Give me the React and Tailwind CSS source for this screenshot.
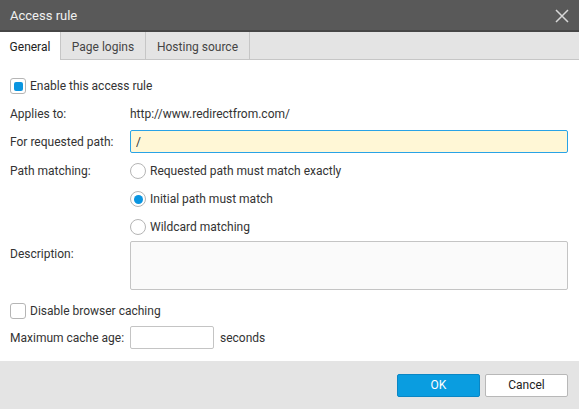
import React, { useState } from 'react';

const font = { fontFamily: 'Roboto, "Liberation Sans", sans-serif' };

const Checkbox = ({ checked, onChange }) => (
  <button
    type="button"
    onClick={onChange}
    className="w-[16px] h-[16px] border border-[#b5b5b5] rounded-[3px] bg-white flex items-center justify-center shrink-0"
  >
    {checked && <span className="w-[9px] h-[9px] rounded-[2px] bg-[#0a95e0]" />}
  </button>
);

const Radio = ({ checked, onChange, label }) => (
  <label className="flex items-center gap-[4px] h-[28px] cursor-pointer" onClick={onChange}>
    <span className="w-[16px] h-[16px] rounded-full border border-[#b5b5b5] bg-white flex items-center justify-center shrink-0">
      {checked && <span className="w-[9px] h-[9px] rounded-full bg-[#0a95e0]" />}
    </span>
    <span>{label}</span>
  </label>
);

const Label = ({ children }) => <div className="w-[120px] shrink-0">{children}</div>;

const App = () => {
  const [enabled, setEnabled] = useState(true);
  const [noCache, setNoCache] = useState(false);
  const [matching, setMatching] = useState('initial');
  const [path, setPath] = useState('/');

  return (
    <div style={font} className="w-[579px] h-[409px] bg-white flex flex-col text-[12px] text-[#333] overflow-hidden">
      {/* Title bar */}
      <div className="h-[32px] bg-[#595959] border-b-2 border-[#464646] flex items-center justify-between pl-[10px] pr-[10px] pt-[2px] shrink-0">
        <span className="text-[13px] text-[#f0f0f0]">Access rule</span>
        <svg width="14" height="14" viewBox="0 0 14 14" className="text-[#d8d8d8]">
          <path d="M1 1 L13 13 M13 1 L1 13" stroke="currentColor" strokeWidth="1.5" />
        </svg>
      </div>

      {/* Tabs */}
      <div className="h-[28px] bg-[#e4e4e4] flex border-b border-[#c6c6c6] shrink-0">
        <div className="w-[61px] bg-white flex items-center justify-center pt-[2px] text-[#222] border-r border-[#c6c6c6] h-[28px]">General</div>
        <div className="w-[85px] flex items-center justify-center pt-[2px] text-[#444] border-r border-[#c6c6c6]">Page logins</div>
        <div className="w-[104px] flex items-center justify-center pt-[2px] text-[#444] border-r border-[#c6c6c6]">Hosting source</div>
      </div>

      {/* Body */}
      <div className="flex-1 flex flex-col pl-[10px] pr-[11px] pt-[17px]">
        <div className="flex items-center gap-[4px] h-[18px]">
          <Checkbox checked={enabled} onChange={() => setEnabled(!enabled)} />
          <span>Enable this access rule</span>
        </div>

        <div className="flex items-center h-[19px] mt-[9px]">
          <Label>Applies to:</Label>
          <span>http://www.redirectfrom.com/</span>
        </div>

        <div className="flex items-center mt-[7px]">
          <Label>For requested path:</Label>
          <input
            value={path}
            onChange={(e) => setPath(e.target.value)}
            className="flex-1 h-[23px] bg-[#fff7d6] border border-[#29a3e6] rounded-[2px] px-[5px] outline-none text-[12px] text-[#333]"
          />
        </div>

        <div className="flex mt-[4px]">
          <div className="w-[120px] shrink-0 h-[28px] flex items-center">Path matching:</div>
          <div className="flex flex-col">
            <Radio checked={matching === 'exact'} onChange={() => setMatching('exact')} label="Requested path must match exactly" />
            <Radio checked={matching === 'initial'} onChange={() => setMatching('initial')} label="Initial path must match" />
            <Radio checked={matching === 'wild'} onChange={() => setMatching('wild')} label="Wildcard matching" />
          </div>
        </div>

        <div className="flex">
          <div className="w-[120px] shrink-0 pt-[4px]">Description:</div>
          <textarea className="flex-1 h-[49px] bg-[#fafafa] border border-[#c4c4c4] rounded-[2px] resize-none outline-none" />
        </div>

        <div className="flex items-center gap-[4px] h-[18px] mt-[12px]">
          <Checkbox checked={noCache} onChange={() => setNoCache(!noCache)} />
          <span>Disable browser caching</span>
        </div>

        <div className="flex items-center mt-[6px]">
          <Label>Maximum cache age:</Label>
          <input className="w-[84px] h-[23px] bg-white border border-[#c4c4c4] rounded-[2px] outline-none" />
          <span className="ml-[6px]">seconds</span>
        </div>
      </div>

      {/* Footer */}
      <div className="h-[48px] bg-[#e4e4e4] flex items-center justify-end gap-[5px] pr-[11px] shrink-0">
        <button className="w-[83px] h-[23px] bg-[#0a9de0] border border-[#0a86c4] text-white rounded-[2px]">OK</button>
        <button className="w-[83px] h-[23px] bg-white border border-[#b8b8b8] text-[#222] rounded-[2px]">Cancel</button>
      </div>
    </div>
  );
};

export default App;
